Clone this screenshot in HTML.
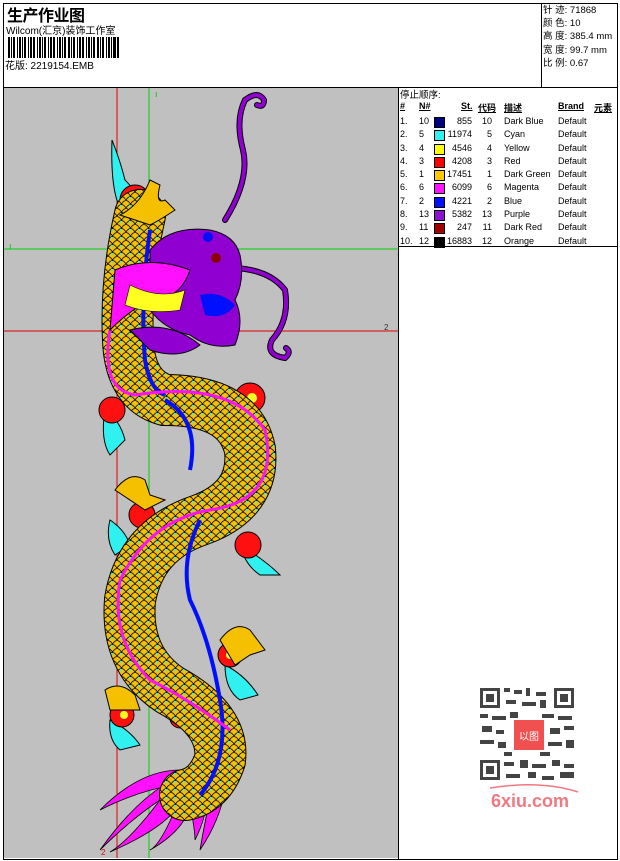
<!DOCTYPE html>
<html><head><meta charset="utf-8"><style>
*{margin:0;padding:0}
body{width:620px;height:861px;background:#fff;position:relative;overflow:hidden;font-family:"Liberation Sans","Noto Sans CJK SC",sans-serif;color:#000}
.a{position:absolute;white-space:nowrap}
.t{font-size:9px;white-space:nowrap}
</style></head><body>
<div class="a" style="left:3px;top:3px;width:613px;height:855px;border:1px solid #000"></div>
<div class="a" style="left:3px;top:87px;width:614px;height:1px;background:#000"></div>
<div class="a" style="left:541px;top:3px;width:1px;height:84px;background:#000"></div>
<div class="a" style="left:398px;top:87px;width:1px;height:772px;background:#000"></div>
<div class="a" style="left:398px;top:246px;width:219px;height:1px;background:#000"></div>
<div class="a" style="left:7px;top:2px;font-size:16px;font-weight:bold;letter-spacing:-0.5px">生产作业图</div>
<div class="a t" style="left:6px;top:22px;font-size:10px">Wilcom(汇京)装饰工作室</div>
<svg class="a" style="left:8px;top:37px" width="112" height="21">
<g fill="#000">
<rect x="0" y="0" width="2" height="21"/><rect x="3" y="0" width="1" height="21"/><rect x="5" y="0" width="2" height="21"/><rect x="9" y="0" width="1" height="21"/><rect x="11" y="0" width="2" height="21"/><rect x="14" y="0" width="1" height="21"/><rect x="16" y="0" width="2" height="21"/><rect x="20" y="0" width="1" height="21"/><rect x="22" y="0" width="2" height="21"/><rect x="25" y="0" width="2" height="21"/><rect x="29" y="0" width="1" height="21"/><rect x="31" y="0" width="2" height="21"/><rect x="34" y="0" width="1" height="21"/><rect x="36" y="0" width="2" height="21"/><rect x="40" y="0" width="1" height="21"/><rect x="42" y="0" width="2" height="21"/><rect x="45" y="0" width="2" height="21"/><rect x="49" y="0" width="1" height="21"/><rect x="51" y="0" width="2" height="21"/><rect x="54" y="0" width="1" height="21"/><rect x="56" y="0" width="2" height="21"/><rect x="60" y="0" width="2" height="21"/><rect x="63" y="0" width="1" height="21"/><rect x="65" y="0" width="2" height="21"/><rect x="69" y="0" width="1" height="21"/><rect x="71" y="0" width="2" height="21"/><rect x="74" y="0" width="2" height="21"/><rect x="78" y="0" width="1" height="21"/><rect x="80" y="0" width="2" height="21"/><rect x="83" y="0" width="1" height="21"/><rect x="85" y="0" width="2" height="21"/><rect x="89" y="0" width="2" height="21"/><rect x="92" y="0" width="1" height="21"/><rect x="94" y="0" width="2" height="21"/><rect x="98" y="0" width="1" height="21"/><rect x="100" y="0" width="2" height="21"/><rect x="103" y="0" width="1" height="21"/><rect x="105" y="0" width="3" height="21"/><rect x="109" y="0" width="2" height="21"/>
</g></svg>
<div class="a" style="left:5px;top:59px;height:12px;overflow:hidden;font-size:10px;line-height:16px">花版: 2219154.EMB</div>
<div class="a t" style="left:543px;top:4px;font-size:9.5px;line-height:13.2px">针 迹: 71868<br>颜 色: 10<br>高 度: 385.4 mm<br>宽 度: 99.7 mm<br>比 例: 0.67</div>

<svg class="a" style="left:4px;top:88px" width="394" height="770" viewBox="4 88 394 770">
<defs>
<pattern id="sc" width="9" height="8" patternUnits="userSpaceOnUse">
<rect width="9" height="8" fill="#f5c000"/>
<path d="M0 8 Q4.5 1 9 8 M-4.5 4 Q0 -3 4.5 4 M4.5 4 Q9 -3 13.5 4" fill="none" stroke="#000" stroke-width="0.8"/>
<rect x="3" y="5" width="2" height="2" fill="#3ef0f0"/>
</pattern>
</defs>
<rect x="4" y="88" width="394" height="770" fill="#c0c0c0"/>
<line x1="117" y1="88" x2="117" y2="858" stroke="#e00000"/>
<line x1="149" y1="88" x2="149" y2="858" stroke="#00d000"/>
<line x1="4" y1="249" x2="398" y2="249" stroke="#00d000"/>
<line x1="4" y1="331" x2="398" y2="331" stroke="#e00000"/>
<text x="155" y="97" font-size="9" fill="#00c000">ı</text>
<text x="9" y="249" font-size="9" fill="#00c000">ı</text>
<text x="384" y="330" font-size="8" fill="#333">2</text>
<text x="101" y="855" font-size="8" fill="#e00000">2</text>
<g fill="#30f0f0" stroke="#000" stroke-width="1">
<path d="M112 140 Q120 160 125 180 Q135 190 140 200 L125 215 Q110 200 112 140Z"/>
<path d="M105 410 Q120 420 125 440 L110 455 Q100 440 105 410Z"/>
<path d="M110 520 Q125 530 130 545 L115 555 Q105 540 110 520Z"/>
<path d="M240 545 Q265 560 280 575 L260 575 Q245 565 240 545Z"/>
<path d="M225 665 Q245 675 258 695 L240 700 Q225 690 225 665Z"/>
<path d="M110 720 Q130 730 140 745 L120 750 Q108 740 110 720Z"/>
</g>
<g fill="#ff1010" stroke="#000" stroke-width="1">
<circle cx="135" cy="200" r="15"/><circle cx="112" cy="410" r="13"/><circle cx="142" cy="515" r="13"/>
<circle cx="250" cy="398" r="15"/><circle cx="248" cy="545" r="13"/><circle cx="230" cy="655" r="12"/>
<circle cx="122" cy="715" r="12"/><circle cx="180" cy="718" r="10"/><circle cx="110" cy="320" r="8"/>
</g>
<g fill="#ffff20"><circle cx="137" cy="200" r="5"/><circle cx="252" cy="398" r="5"/><circle cx="230" cy="655" r="4"/><circle cx="124" cy="715" r="4"/></g>
<g fill="none" stroke="#000" stroke-width="6" stroke-linecap="round">
<path d="M225 220 Q250 180 243 150 Q235 120 245 100 Q258 90 264 100 Q264 108 257 105"/>
<path d="M235 268 Q270 270 285 290 Q290 320 272 340 Q265 355 285 358 Q292 352 286 348"/>
</g>
<g fill="none" stroke="#9000d0" stroke-width="4" stroke-linecap="round">
<path d="M225 220 Q250 180 243 150 Q235 120 245 100 Q258 90 264 100 Q264 108 257 105"/>
<path d="M235 268 Q270 270 285 290 Q290 320 272 340 Q265 355 285 358 Q292 352 286 348"/>
</g>
<g stroke="#000" stroke-width="0.8" fill="#ff10ff">
<path d="M200 770 Q150 780 100 850 Q130 820 160 800 Q130 840 110 852 Q160 830 175 810 Q160 845 150 850 Q185 830 190 805 Q195 830 195 840 Q210 810 205 790Z"/>
<path d="M180 770 Q140 770 100 810 Q140 790 175 785Z"/>
<path d="M215 775 Q205 820 200 850 Q220 820 225 790Z"/>
</g>
<path d="M140 215 Q125 280 128 340 Q130 390 165 400 Q240 400 250 450 Q255 500 200 520 Q140 540 130 600 Q125 660 170 690 Q225 720 220 760 Q210 790 185 795" fill="none" stroke="#000" stroke-width="52" stroke-linecap="round"/>
<path d="M140 215 Q125 280 128 340 Q130 390 165 400 Q240 400 250 450 Q255 500 200 520 Q140 540 130 600 Q125 660 170 690 Q225 720 220 760 Q210 790 185 795" fill="none" stroke="url(#sc)" stroke-width="50" stroke-linecap="round"/>
<path d="M150 230 Q140 300 145 360 Q150 390 165 395 M165 400 Q200 420 190 470 M200 520 Q180 560 190 600 Q210 640 220 700 Q230 760 200 795" fill="none" stroke="#0010ff" stroke-width="4"/>
<path d="M110 330 Q100 390 135 395 Q230 380 265 430 Q280 500 210 510 Q150 520 120 580 Q110 640 150 680 Q190 700 230 730" fill="none" stroke="#ff10ff" stroke-width="3"/>
<path d="M150 250 Q170 225 210 230 Q235 235 240 255 Q245 280 235 300 Q245 320 235 345 Q210 350 190 335 Q165 330 150 310Z" fill="#9000d0" stroke="#000"/>
<path d="M115 270 Q150 255 190 270 Q180 300 150 300 Q130 310 110 330Z" fill="#ff10ff" stroke="#000"/>
<path d="M130 285 Q160 300 185 290 L180 310 Q150 315 125 305Z" fill="#ffff20" stroke="#000" stroke-width="0.6"/>
<path d="M200 295 Q220 290 235 305 Q225 320 205 315Z" fill="#0010ff"/>
<path d="M130 330 Q170 320 200 345 Q180 360 150 350Z" fill="#9000d0" stroke="#000"/>
<circle cx="208" cy="237" r="5" fill="#0010ff"/><circle cx="216" cy="258" r="5" fill="#8b0000"/>
<g fill="#f5c000" stroke="#000" stroke-width="1">
<path d="M120 215 Q140 205 150 180 L160 185 Q155 205 165 200 L175 210 Q160 220 150 225Z"/>
<path d="M115 490 Q130 470 145 480 L150 495 L165 500 L145 510 Z"/>
<path d="M220 640 Q235 620 250 630 L265 650 L250 655 L235 665Z"/>
<path d="M105 690 Q120 680 135 695 L140 710 L110 710Z"/>
</g>
</svg>

<div class="a t" style="left:400px;top:87px;font-size:9.5px">停止顺序:</div>
<div class="a" style="left:400px;top:101px;width:218px;font-size:9px;font-weight:bold">
<span class="a" style="left:0;text-decoration:underline">#</span>
<span class="a" style="left:19px;text-decoration:underline">N#</span>
<span class="a" style="left:61px;text-decoration:underline">St.</span>
<span class="a" style="left:78px;text-decoration:underline">代码</span>
<span class="a" style="left:104px;text-decoration:underline">描述</span>
<span class="a" style="left:158px;text-decoration:underline">Brand</span>
<span class="a" style="left:194px;text-decoration:underline">元素</span>
</div>
<div class="a" style="left:400px;top:115px;width:218px;font-size:9px;line-height:13.3px">
<div style="position:relative;height:13.3px"><span class="a">1.</span><span class="a" style="left:19px">10</span><i class="a" style="left:34px;top:2px;width:9px;height:9px;background:#000080;border:1px solid #000"></i><span class="a" style="left:32px;width:40px;text-align:right">855</span><span class="a" style="left:78px;width:14px;text-align:right">10</span><span class="a" style="left:104px">Dark Blue</span><span class="a" style="left:158px">Default</span></div>
<div style="position:relative;height:13.3px"><span class="a">2.</span><span class="a" style="left:19px">5</span><i class="a" style="left:34px;top:2px;width:9px;height:9px;background:#30f0f0;border:1px solid #000"></i><span class="a" style="left:32px;width:40px;text-align:right">11974</span><span class="a" style="left:78px;width:14px;text-align:right">5</span><span class="a" style="left:104px">Cyan</span><span class="a" style="left:158px">Default</span></div>
<div style="position:relative;height:13.3px"><span class="a">3.</span><span class="a" style="left:19px">4</span><i class="a" style="left:34px;top:2px;width:9px;height:9px;background:#ffff00;border:1px solid #000"></i><span class="a" style="left:32px;width:40px;text-align:right">4546</span><span class="a" style="left:78px;width:14px;text-align:right">4</span><span class="a" style="left:104px">Yellow</span><span class="a" style="left:158px">Default</span></div>
<div style="position:relative;height:13.3px"><span class="a">4.</span><span class="a" style="left:19px">3</span><i class="a" style="left:34px;top:2px;width:9px;height:9px;background:#ff0000;border:1px solid #000"></i><span class="a" style="left:32px;width:40px;text-align:right">4208</span><span class="a" style="left:78px;width:14px;text-align:right">3</span><span class="a" style="left:104px">Red</span><span class="a" style="left:158px">Default</span></div>
<div style="position:relative;height:13.3px"><span class="a">5.</span><span class="a" style="left:19px">1</span><i class="a" style="left:34px;top:2px;width:9px;height:9px;background:#ffc800;border:1px solid #000"></i><span class="a" style="left:32px;width:40px;text-align:right">17451</span><span class="a" style="left:78px;width:14px;text-align:right">1</span><span class="a" style="left:104px">Dark Green</span><span class="a" style="left:158px">Default</span></div>
<div style="position:relative;height:13.3px"><span class="a">6.</span><span class="a" style="left:19px">6</span><i class="a" style="left:34px;top:2px;width:9px;height:9px;background:#ff10ff;border:1px solid #000"></i><span class="a" style="left:32px;width:40px;text-align:right">6099</span><span class="a" style="left:78px;width:14px;text-align:right">6</span><span class="a" style="left:104px">Magenta</span><span class="a" style="left:158px">Default</span></div>
<div style="position:relative;height:13.3px"><span class="a">7.</span><span class="a" style="left:19px">2</span><i class="a" style="left:34px;top:2px;width:9px;height:9px;background:#0010ff;border:1px solid #000"></i><span class="a" style="left:32px;width:40px;text-align:right">4221</span><span class="a" style="left:78px;width:14px;text-align:right">2</span><span class="a" style="left:104px">Blue</span><span class="a" style="left:158px">Default</span></div>
<div style="position:relative;height:13.3px"><span class="a">8.</span><span class="a" style="left:19px">13</span><i class="a" style="left:34px;top:2px;width:9px;height:9px;background:#9010d0;border:1px solid #000"></i><span class="a" style="left:32px;width:40px;text-align:right">5382</span><span class="a" style="left:78px;width:14px;text-align:right">13</span><span class="a" style="left:104px">Purple</span><span class="a" style="left:158px">Default</span></div>
<div style="position:relative;height:13.3px"><span class="a">9.</span><span class="a" style="left:19px">11</span><i class="a" style="left:34px;top:2px;width:9px;height:9px;background:#a00000;border:1px solid #000"></i><span class="a" style="left:32px;width:40px;text-align:right">247</span><span class="a" style="left:78px;width:14px;text-align:right">11</span><span class="a" style="left:104px">Dark Red</span><span class="a" style="left:158px">Default</span></div>
<div style="position:relative;height:13.3px"><span class="a">10.</span><span class="a" style="left:19px">12</span><i class="a" style="left:34px;top:2px;width:9px;height:9px;background:#000;border:1px solid #000"></i><span class="a" style="left:32px;width:40px;text-align:right">16883</span><span class="a" style="left:78px;width:14px;text-align:right">12</span><span class="a" style="left:104px">Orange</span><span class="a" style="left:158px">Default</span></div>
</div>

<svg class="a" style="left:470px;top:680px" width="120" height="135">
<rect x="0" y="0" width="120" height="135" fill="#fff"/>
<g fill="#444">
<rect x="10" y="8" width="20" height="20"/><rect x="84" y="8" width="20" height="20"/><rect x="10" y="80" width="20" height="20"/>
</g>
<g fill="#fff"><rect x="13" y="11" width="14" height="14"/><rect x="87" y="11" width="14" height="14"/><rect x="13" y="83" width="14" height="14"/></g>
<g fill="#444"><rect x="16" y="14" width="8" height="8"/><rect x="90" y="14" width="8" height="8"/><rect x="16" y="86" width="8" height="8"/>
<rect x="34" y="8" width="6" height="4"/><rect x="44" y="10" width="8" height="4"/><rect x="56" y="8" width="4" height="8"/><rect x="66" y="12" width="10" height="4"/><rect x="36" y="20" width="10" height="4"/><rect x="52" y="22" width="14" height="4"/><rect x="70" y="20" width="6" height="8"/>
<rect x="10" y="34" width="8" height="4"/><rect x="22" y="36" width="14" height="4"/><rect x="40" y="32" width="8" height="6"/><rect x="72" y="34" width="12" height="4"/><rect x="88" y="36" width="14" height="4"/>
<rect x="12" y="46" width="10" height="6"/><rect x="26" y="50" width="8" height="4"/><rect x="80" y="48" width="10" height="6"/><rect x="94" y="46" width="10" height="4"/>
<rect x="10" y="60" width="14" height="4"/><rect x="28" y="62" width="8" height="6"/><rect x="78" y="62" width="14" height="4"/><rect x="96" y="60" width="8" height="8"/>
<rect x="34" y="82" width="10" height="4"/><rect x="50" y="80" width="8" height="8"/><rect x="62" y="84" width="14" height="4"/><rect x="82" y="80" width="8" height="6"/><rect x="94" y="84" width="10" height="4"/>
<rect x="36" y="94" width="14" height="4"/><rect x="58" y="92" width="8" height="6"/><rect x="72" y="96" width="12" height="4"/><rect x="90" y="92" width="14" height="6"/>
<rect x="34" y="72" width="8" height="4"/><rect x="70" y="72" width="10" height="4"/>
</g>
<rect x="44" y="40" width="30" height="30" fill="#f05050"/>
<text x="59" y="60" font-size="10" fill="#fff" text-anchor="middle">以图</text>
<text x="60" y="127" font-size="18" font-weight="bold" fill="#f07880" text-anchor="middle" font-family="Liberation Sans,sans-serif">6xiu.com</text>
<path d="M20 108 Q70 100 108 112" fill="none" stroke="#f07880" stroke-width="1.5"/>
</svg>
</body></html>
